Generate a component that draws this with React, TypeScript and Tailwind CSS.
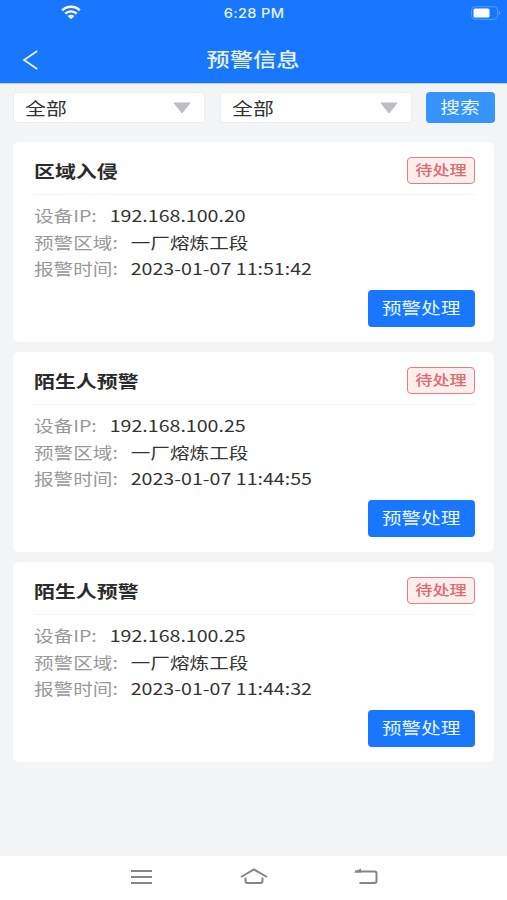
import type { ReactNode } from "react"

const alarms = [
  { title: "区域入侵", ip: "192.168.100.20", area: "一厂熔炼工段", time: "2023-01-07 11:51:42" },
  { title: "陌生人预警", ip: "192.168.100.25", area: "一厂熔炼工段", time: "2023-01-07 11:44:55" },
  { title: "陌生人预警", ip: "192.168.100.25", area: "一厂熔炼工段", time: "2023-01-07 11:44:32" },
]

function Wide({ children }: { children: ReactNode }) {
  return <span className="inline-block scale-x-[1.23] whitespace-nowrap">{children}</span>
}

function StatusBar() {
  return (
    <div className="relative flex h-[27px] items-center justify-center">
      <svg className="absolute left-[61px] top-[5px]" width="20" height="15" viewBox="0 0 20 15" fill="none" stroke="white" strokeWidth="2.3">
        <path d="M1.2 5.4C6 .5 14 .5 18.8 5.4" />
        <path d="M4.3 8.6C7.4 5.5 12.6 5.5 15.7 8.6" />
        <path d="M6.6 11.1Q10 8.3 13.4 11.1L10 14.3Z" fill="white" stroke="none" />
      </svg>
      <span className="ml-[2px] scale-x-[1.12] font-['Inter',sans-serif] text-[13px] font-medium tracking-[0.3px] text-[#e4f3ff]">6:28 PM</span>
      <svg className="absolute left-[471px] top-[6px]" width="31" height="15" viewBox="0 0 31 15">
        <rect x="0.6" y="0.7" width="26" height="12.6" rx="3.5" fill="none" stroke="#4f9fff" />
        <rect x="2.5" y="2.5" width="16" height="9" rx="1.5" fill="white" />
        <path d="M28 5Q30.4 7 28 9Z" fill="#69b0ff" />
      </svg>
    </div>
  )
}

function Select() {
  return (
    <div className="flex h-[31px] w-[192px] items-center justify-between rounded border border-[#ebedf0] bg-white pl-[11px] pr-[13px]">
      <span className="inline-block origin-left scale-x-[1.23] text-[17px] leading-none text-[#333]">全部</span>
      <svg width="18" height="12" viewBox="0 0 18 12">
        <path d="M1 1H17L9 11Z" fill="#bdbfc4" stroke="#bdbfc4" strokeLinejoin="round" />
      </svg>
    </div>
  )
}

function Row({ label, value }: { label: string; value: string }) {
  return (
    <div className="flex h-[26.6px] w-[330px] origin-left scale-x-[1.225] items-center gap-[10.5px] whitespace-nowrap text-base leading-none">
      <span className="text-[#999]">{label}:</span>
      <span className="text-[#333]">{value}</span>
    </div>
  )
}

function AlarmCard({ alarm }: { alarm: (typeof alarms)[number] }) {
  return (
    <div className="flex h-[200px] flex-col rounded-md bg-white pl-[20.5px] pr-[19px]">
      <div className="flex h-[53px] items-center justify-between border-b border-[#f5f5f6] pt-[5px]">
        <span className="inline-block origin-left scale-x-[1.23] text-[17px] font-bold leading-none text-[#2b2b2b]">{alarm.title}</span>
        <span className="flex h-[27px] w-[68px] items-center justify-center rounded border-[1.5px] border-[#e27f83] bg-[#fdeeee] pb-[3px] text-sm font-medium leading-none text-[#df6b6e]">
          <Wide>待处理</Wide>
        </span>
      </div>
      <div className="pt-[7px]">
        <Row label="设备IP" value={alarm.ip} />
        <Row label="预警区域" value={alarm.area} />
        <Row label="报警时间" value={alarm.time} />
      </div>
      <button className="mt-[8px] flex h-[37px] w-[107px] shrink-0 items-center justify-center self-end rounded bg-[#1877fe] pb-[2px] text-base leading-none text-[#eaf7ff]">
        <Wide>预警处理</Wide>
      </button>
    </div>
  )
}

export default function App() {
  return (
    <div className="flex h-[900px] w-[507px] flex-col overflow-hidden bg-[#f2f4f6] font-['Noto_Sans_CJK_SC',sans-serif]">
      <header className="h-[84px] shrink-0 border-b border-[#b5d7ff] bg-[#1877fe]">
        <StatusBar />
        <div className="relative flex h-[65px] items-center justify-center">
          <svg className="absolute left-[22px] top-[23px]" width="17" height="20" viewBox="0 0 17 20" fill="none" stroke="#eaf7ff" strokeWidth="1.7">
            <path d="M15.3 1L2 10L15.3 19" />
          </svg>
          <h1 className="pb-[2px] text-[19px] font-medium leading-none text-[#e4f3ff]">
            <Wide>预警信息</Wide>
          </h1>
        </div>
      </header>

      <div className="flex pl-[13px] pt-2">
        <Select />
        <div className="ml-[15px]">
          <Select />
        </div>
        <button className="ml-[14px] flex h-[31px] w-[69px] items-center justify-center rounded bg-[#3793fd] pb-[3px] text-base leading-none text-[#eaf7ff]">
          <Wide>搜索</Wide>
        </button>
      </div>

      <main className="flex flex-1 flex-col gap-[10px] px-[13px] pt-[19px]">
        {alarms.map((alarm) => (
          <AlarmCard key={alarm.time} alarm={alarm} />
        ))}
      </main>

      <nav className="flex h-[44px] shrink-0 items-center justify-center gap-[84px] bg-white">
        <svg width="28" height="20" viewBox="0 0 28 20" stroke="#858585" strokeWidth="1.9">
          <path d="M3 3H24M3 9H24M3 15H24" />
        </svg>
        <svg width="28" height="20" viewBox="0 0 28 20" fill="none" stroke="#858585" strokeWidth="2">
          <path d="M1 9L14 1.5L27 9" />
          <path d="M5.5 9.5V13Q5.5 15 7.5 15H20.5Q22.5 15 22.5 13V9.5" />
        </svg>
        <svg width="28" height="20" viewBox="0 0 28 20" fill="none" stroke="#858585" strokeWidth="2">
          <path d="M3 3.5H22.5Q24.5 3.5 24.5 5.5V13Q24.5 15 22.5 15H7.5" />
          <path d="M1.5 4.5L9 .5V4.5Z" fill="#858585" stroke="none" />
        </svg>
      </nav>
    </div>
  )
}
